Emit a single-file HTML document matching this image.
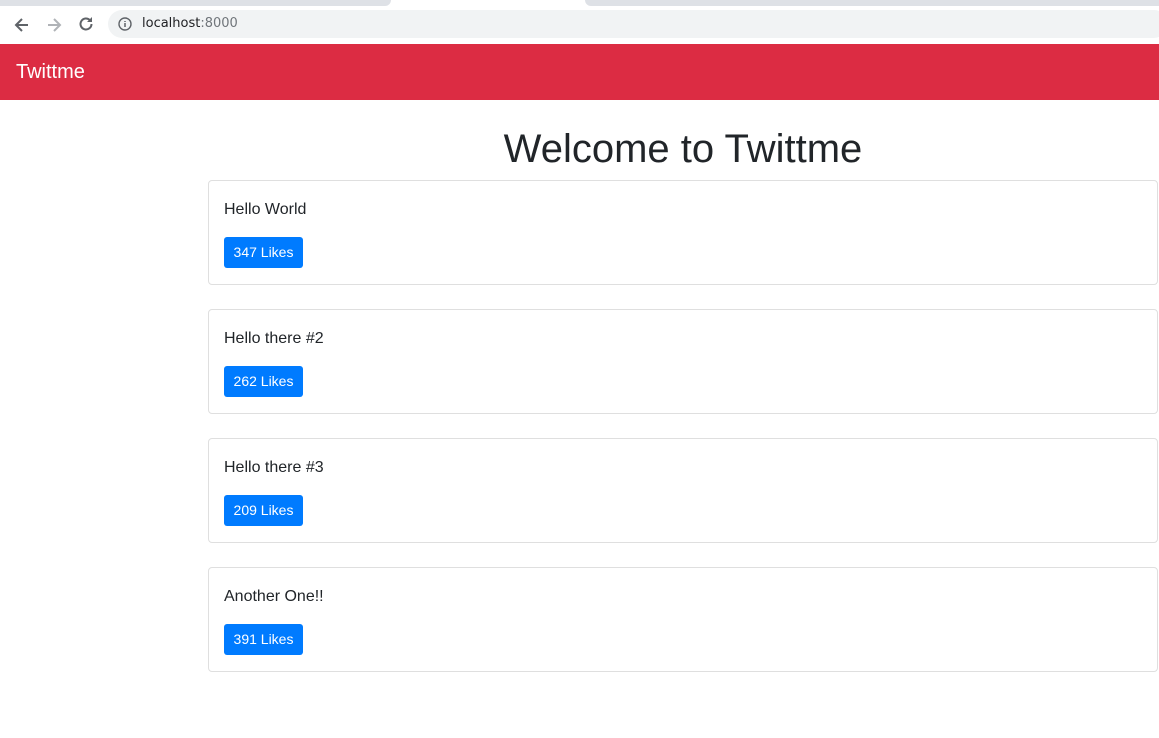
<!DOCTYPE html>
<html><head><style>
*{box-sizing:border-box;margin:0;padding:0}
body{width:1159px;height:738px;overflow:hidden;background:#fff;font-family:"Liberation Sans",sans-serif;color:#212529;position:relative}
.tabs{position:absolute;top:0;left:0;width:1159px;height:9px;background:#fff}
.t1{position:absolute;left:0;top:0;width:391px;height:6px;background:#dee1e6;border-radius:0 0 8px 0}
.t2{position:absolute;left:585px;top:0;width:574px;height:6px;background:#dee1e6;border-radius:0 0 0 8px}
.bar{position:absolute;top:9px;left:0;width:1159px;height:35px;background:#fff}
.url{position:absolute;left:108px;top:1px;width:1060px;height:28px;background:#f1f3f4;border-radius:14px}
.url span{position:absolute;left:34px;top:6px;font-family:"DejaVu Sans",sans-serif;font-size:13px;color:#202124}
.url span i{font-style:normal;color:#70757a}
nav{position:absolute;top:44px;left:0;width:1159px;height:56px;background:#dc2c43}
nav a{position:absolute;left:16px;top:17px;font-size:20px;color:#fff}
h1{position:absolute;top:127px;left:208px;width:950px;text-align:center;font-weight:400;font-size:40px}
.card{position:absolute;left:208px;width:950px;height:105px;border:1px solid #dfdfdf;border-radius:4px}
.card p{position:absolute;left:15px;top:20px;font-size:16px}
.card b{position:absolute;left:15px;top:56px;width:79px;height:31px;background:#007bff;color:#fff;border-radius:3px;font-weight:400;font-size:14px;line-height:31px;text-align:center}
</style></head><body>
<div class="tabs"><div class="t1"></div><div class="t2"></div></div>
<div class="bar">
<svg style="position:absolute;left:12px;top:6px" width="20" height="20" viewBox="0 0 20 20"><path d="M16 10H5M10 4L4 10l6 6" stroke="#5f6368" stroke-width="2" fill="none"/></svg>
<svg style="position:absolute;left:44px;top:6px" width="20" height="20" viewBox="0 0 20 20"><path d="M4 10h11M10 4l6 6-6 6" stroke="#b0b3b7" stroke-width="2" fill="none"/></svg>
<svg style="position:absolute;left:76px;top:5px" width="20" height="20" viewBox="0 0 20 20"><path d="M15.5 10a5.5 5.5 0 1 1-1.6-3.9" stroke="#5f6368" stroke-width="2" fill="none"/><path d="M16 3v5h-5z" fill="#5f6368"/></svg>
<div class="url"><svg style="position:absolute;left:10px;top:7px" width="14" height="14" viewBox="0 0 14 14"><circle cx="7" cy="7" r="6" stroke="#5f6368" stroke-width="1.4" fill="none"/><path d="M7 6v4M7 4v1" stroke="#5f6368" stroke-width="1.5"/></svg><span>localhost<i>:8000</i></span></div>
</div>
<nav><a>Twittme</a></nav>
<h1>Welcome to Twittme</h1>
<div class="card" style="top:180px"><p>Hello World</p><b>347 Likes</b></div>
<div class="card" style="top:309px"><p>Hello there #2</p><b>262 Likes</b></div>
<div class="card" style="top:438px"><p>Hello there #3</p><b>209 Likes</b></div>
<div class="card" style="top:567px"><p>Another One!!</p><b>391 Likes</b></div>
</body></html>
